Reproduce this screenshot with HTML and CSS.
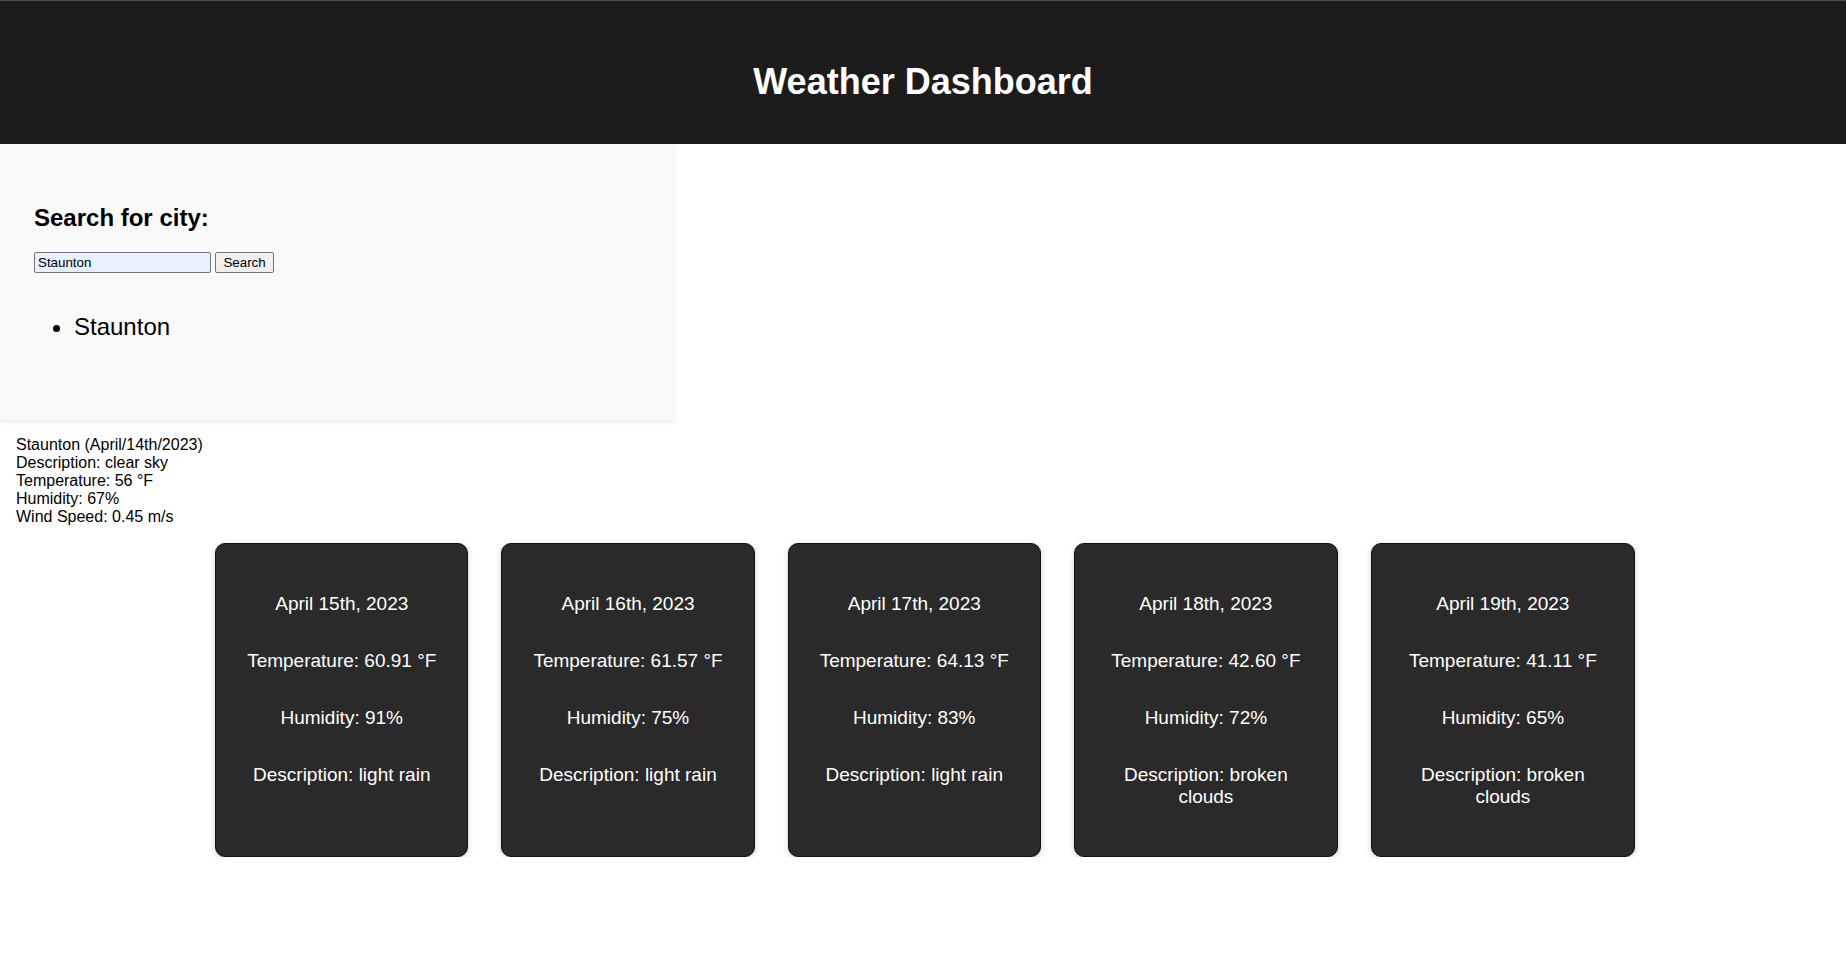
FILE: index.html
```html
<!DOCTYPE html>
<html lang="en">
<head>
<meta charset="utf-8">
<title>Weather Dashboard</title>
<link rel="stylesheet" href="styles.css">
</head>
<body>
<header class="site-header">
  <h1 class="site-title">Weather Dashboard</h1>
</header>
<section class="search-panel">
  <h2 class="search-title">Search for city:</h2>
  <form class="search-form">
    <input class="search-input" type="text" value="Staunton"> <button class="search-button" type="button">Search</button>
  </form>
  <ul class="history-list">
    <li class="history-item">Staunton</li>
  </ul>
</section>
<section class="current-weather">
  <div class="current-line">Staunton (April/14th/2023)</div>
  <div class="current-line">Description: clear sky</div>
  <div class="current-line">Temperature: 56 °F</div>
  <div class="current-line">Humidity: 67%</div>
  <div class="current-line">Wind Speed: 0.45 m/s</div>
</section>
<section class="forecast">
  <div class="forecast-card">
    <p class="forecast-text">April 15th, 2023</p>
    <p class="forecast-text">Temperature: 60.91 °F</p>
    <p class="forecast-text">Humidity: 91%</p>
    <p class="forecast-text">Description: light rain</p>
  </div>
  <div class="forecast-card">
    <p class="forecast-text">April 16th, 2023</p>
    <p class="forecast-text">Temperature: 61.57 °F</p>
    <p class="forecast-text">Humidity: 75%</p>
    <p class="forecast-text">Description: light rain</p>
  </div>
  <div class="forecast-card">
    <p class="forecast-text">April 17th, 2023</p>
    <p class="forecast-text">Temperature: 64.13 °F</p>
    <p class="forecast-text">Humidity: 83%</p>
    <p class="forecast-text">Description: light rain</p>
  </div>
  <div class="forecast-card">
    <p class="forecast-text">April 18th, 2023</p>
    <p class="forecast-text">Temperature: 42.60 °F</p>
    <p class="forecast-text">Humidity: 72%</p>
    <p class="forecast-text">Description: broken clouds</p>
  </div>
  <div class="forecast-card">
    <p class="forecast-text">April 19th, 2023</p>
    <p class="forecast-text">Temperature: 41.11 °F</p>
    <p class="forecast-text">Humidity: 65%</p>
    <p class="forecast-text">Description: broken clouds</p>
  </div>
</section>
</body>
</html>
```

FILE: styles.css
```css
html, body {
  margin: 0;
  padding: 0;
  background: #ffffff;
}

body {
  font-family: "Liberation Sans", Arial, sans-serif;
  font-size: 16px;
  color: #000000;
}

.site-header {
  background: #1c1c1c;
  border-top: 1px solid #4a4a4a;
  padding: 60px 0 41px;
}

.site-title {
  margin: 0;
  color: #ffffff;
  font-size: 36px;
  font-weight: bold;
  text-align: center;
  line-height: normal;
}

.search-panel {
  width: 674px;
  box-sizing: border-box;
  background: #f9f9f9;
  padding: 60px 34px 40px;
  box-shadow: 0 2px 5px rgba(0, 0, 0, 0.09);
  position: relative;
}

.search-title {
  font-size: 24px;
  font-weight: bold;
  margin: 0 0 20px;
  line-height: normal;
}

.search-form {
  margin: 0;
}

.search-input {
  font-family: "Liberation Sans", Arial, sans-serif;
  font-size: 13.33px;
  width: 177px;
  height: 21px;
  box-sizing: border-box;
  padding: 1px 3px;
  border: 1px solid #767676;
  border-radius: 2px;
  background: #e8f0fe;
  color: #000;
  vertical-align: middle;
}

.search-button {
  font-family: "Liberation Sans", Arial, sans-serif;
  font-size: 13.33px;
  height: 21px;
  box-sizing: border-box;
  padding: 1px 7px;
  border: 1px solid #767676;
  border-radius: 2px;
  background: #efefef;
  color: #000;
  vertical-align: middle;
}

.history-list {
  margin: 40px 0 39px;
  padding-left: 40px;
}

.history-item {
  font-size: 24px;
  line-height: normal;
}

.current-weather {
  padding: 16px 16px 17px;
}

.current-line {
  line-height: normal;
}

.forecast {
  display: flex;
  justify-content: center;
  align-items: stretch;
  gap: 33px;
  padding-left: 4px;
}

.forecast-card {
  background: #2a2a2a;
  color: #ffffff;
  border: 1px solid #111111;
  border-radius: 10px;
  box-shadow: 0 2px 6px rgba(0, 0, 0, 0.18);
  padding: 49px 31px 48px;
  max-width: 200px;
  text-align: center;
  display: flex;
  flex-direction: column;
  gap: 35px;
}

.forecast-text {
  margin: 0;
  font-size: 19px;
  line-height: normal;
}
```
